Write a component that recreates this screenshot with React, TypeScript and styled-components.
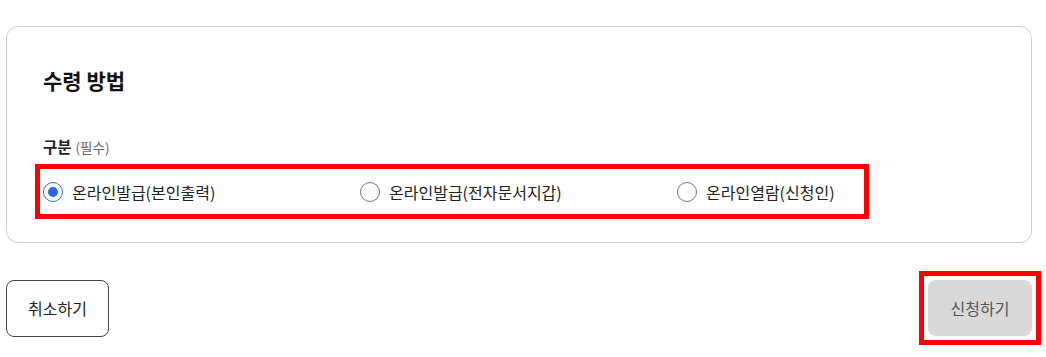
import React, { useState } from 'react';
import styled, { createGlobalStyle } from 'styled-components';

const GlobalStyle = createGlobalStyle`
  html, body {
    margin: 0;
    padding: 0;
    background: #fff;
  }
  body {
    font-family: 'Noto Sans CJK KR', 'Noto Sans', sans-serif;
    color: #222;
  }
  * {
    box-sizing: border-box;
  }
`;

const Page = styled.div`
  width: 1046px;
  padding: 26px 14px 0 6px;
`;

const Card = styled.section`
  border: 1px solid #cfcfcf;
  border-radius: 12px;
  padding: 40px 36px 23px 36px;
`;

const Title = styled.h2`
  margin: 0;
  font-size: 21px;
  line-height: 26px;
  font-weight: 700;
  color: #111;
`;

const FieldLabel = styled.div`
  margin-top: 43px;
  font-size: 15.5px;
  line-height: 20px;
  font-weight: 700;
  color: #222;
`;

const Required = styled.span`
  margin-left: 4px;
  font-size: 13.5px;
  font-weight: 400;
  color: #666;
`;

const Highlight = styled.div`
  margin-top: 7px;
  margin-left: -8px;
  width: 834px;
  border: 5px solid #ff0000;
  padding-left: 3px;
`;

const OptionGrid = styled.div`
  display: grid;
  grid-template-columns: 317px 317px 1fr;
  height: 45px;
  align-items: center;
`;

const Option = styled.label`
  display: flex;
  align-items: center;
  gap: 9px;
  cursor: pointer;
  font-size: 16px;
  color: #222;
  white-space: nowrap;
`;

const RadioCircle = styled.span<{ checked: boolean }>`
  width: 20px;
  height: 20px;
  border-radius: 50%;
  border: 1px solid ${p => (p.checked ? '#2f6fe4' : '#777')};
  display: flex;
  align-items: center;
  justify-content: center;
  flex-shrink: 0;
  background: #fff;

  &::after {
    content: '';
    width: 10px;
    height: 10px;
    border-radius: 50%;
    background: ${p => (p.checked ? '#2a68e0' : 'transparent')};
  }
`;

const HiddenInput = styled.input`
  display: none;
`;

const Actions = styled.div`
  display: flex;
  justify-content: space-between;
  align-items: center;
  margin-top: 28px;
`;

const CancelButton = styled.button`
  width: 103px;
  height: 57px;
  border: 1px solid #444;
  border-radius: 8px;
  background: #fff;
  font-family: inherit;
  font-size: 16px;
  color: #222;
  cursor: pointer;
`;

const SubmitFrame = styled.div`
  border: 5px solid #ff0000;
  padding: 4px;
  margin-right: -9px;
`;

const SubmitButton = styled.button`
  display: block;
  width: 104px;
  height: 56px;
  border: none;
  border-radius: 8px;
  background: #d9d9d9;
  font-family: inherit;
  font-size: 16px;
  color: #555;
  cursor: not-allowed;
`;

const options = ['온라인발급(본인출력)', '온라인발급(전자문서지갑)', '온라인열람(신청인)'];

const App: React.FC = () => {
  const [selected, setSelected] = useState(0);

  return (
    <>
      <GlobalStyle />
      <Page>
        <Card>
          <Title>수령 방법</Title>
          <FieldLabel>
            구분<Required>(필수)</Required>
          </FieldLabel>
          <Highlight>
            <OptionGrid>
              {options.map((label, i) => (
                <Option key={label}>
                  <HiddenInput
                    type="radio"
                    name="receive"
                    checked={selected === i}
                    onChange={() => setSelected(i)}
                  />
                  <RadioCircle checked={selected === i} />
                  {label}
                </Option>
              ))}
            </OptionGrid>
          </Highlight>
        </Card>
        <Actions>
          <CancelButton>취소하기</CancelButton>
          <SubmitFrame>
            <SubmitButton disabled>신청하기</SubmitButton>
          </SubmitFrame>
        </Actions>
      </Page>
    </>
  );
};

export default App;
